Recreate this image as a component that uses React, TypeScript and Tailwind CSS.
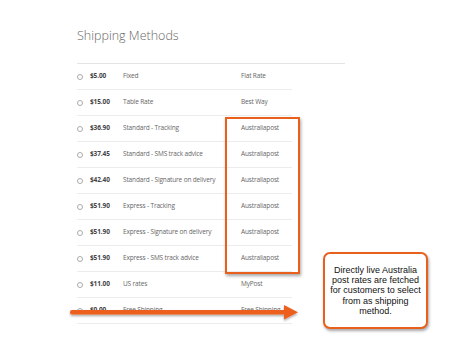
import React from "react";

const rows = [
  ["$5.00", "Fixed", "Flat Rate"],
  ["$15.00", "Table Rate", "Best Way"],
  ["$36.90", "Standard - Tracking", "Australiapost"],
  ["$37.45", "Standard - SMS track advice", "Australiapost"],
  ["$42.40", "Standard - Signature on delivery", "Australiapost"],
  ["$51.90", "Express - Tracking", "Australiapost"],
  ["$51.90", "Express - Signature on delivery", "Australiapost"],
  ["$51.90", "Express - SMS track advice", "Australiapost"],
  ["$11.00", "US rates", "MyPost"],
  ["$0.00", "Free Shipping", "Free Shipping"],
];

export default function App() {
  return (
    <div className="relative w-[450px] h-[343px] overflow-hidden bg-white" style={{ fontFamily: '"Open Sans", sans-serif' }}>
      <div className="pl-[77px] pt-[27px]">
        <div className="text-[12.5px] font-light text-[#666] leading-[18px] h-[36px]">Shipping Methods</div>
        <div className="w-[268px] border-t border-[#e4e4e4]" />
        <div className="w-[215px]">
          {rows.map((r, i) => (
            <div key={i} className="flex items-center h-[26px] border-b border-[#ececec] leading-none">
              <div className="w-[13px] flex items-center">
                <span className="block w-[6px] h-[6px] rounded-full border border-[#aaa] bg-white" />
              </div>
              <div className="w-[33px] text-[6.5px] font-bold text-[#444] tracking-[-0.1px]">{r[0]}</div>
              <div className="w-[118px] text-[6.5px] text-[#666] tracking-[-0.15px]">{r[1]}</div>
              <div className="text-[6.5px] text-[#666] tracking-[-0.15px]">{r[2]}</div>
            </div>
          ))}
        </div>
      </div>

      <div className="absolute left-[225px] top-[117px] w-[75px] h-[157px] border-2 border-[#e8601c] shadow-[1px_2px_3px_rgba(0,0,0,0.35)]" />

      <svg className="absolute left-[66px] top-[302px]" width="236" height="22" viewBox="0 0 236 22">
        <defs>
          <filter id="sh" x="-5%" y="-50%" width="110%" height="200%">
            <feDropShadow dx="0" dy="1.5" stdDeviation="1" floodColor="#000" floodOpacity="0.35" />
          </filter>
        </defs>
        <g filter="url(#sh)">
          <rect x="4" y="8" width="216" height="4.5" rx="2" fill="#ec5f1c" />
          <polygon points="218,3 232,10.2 218,17.5" fill="#ec5f1c" />
        </g>
      </svg>

      <div
        className="absolute left-[323px] top-[252px] w-[105px] h-[77px] rounded-[7px] border-2 border-[#e8601c] bg-white shadow-[1px_2px_3px_rgba(0,0,0,0.35)] flex items-center justify-center text-center text-[9px] leading-[10.3px] text-[#111]"
        style={{ fontFamily: '"Liberation Sans", Arial, sans-serif' }}
      >
        <div>
          Directly live Australia
          <br />
          post rates are fetched
          <br />
          for customers to select
          <br />
          from as shipping
          <br />
          method.
        </div>
      </div>
    </div>
  );
}
